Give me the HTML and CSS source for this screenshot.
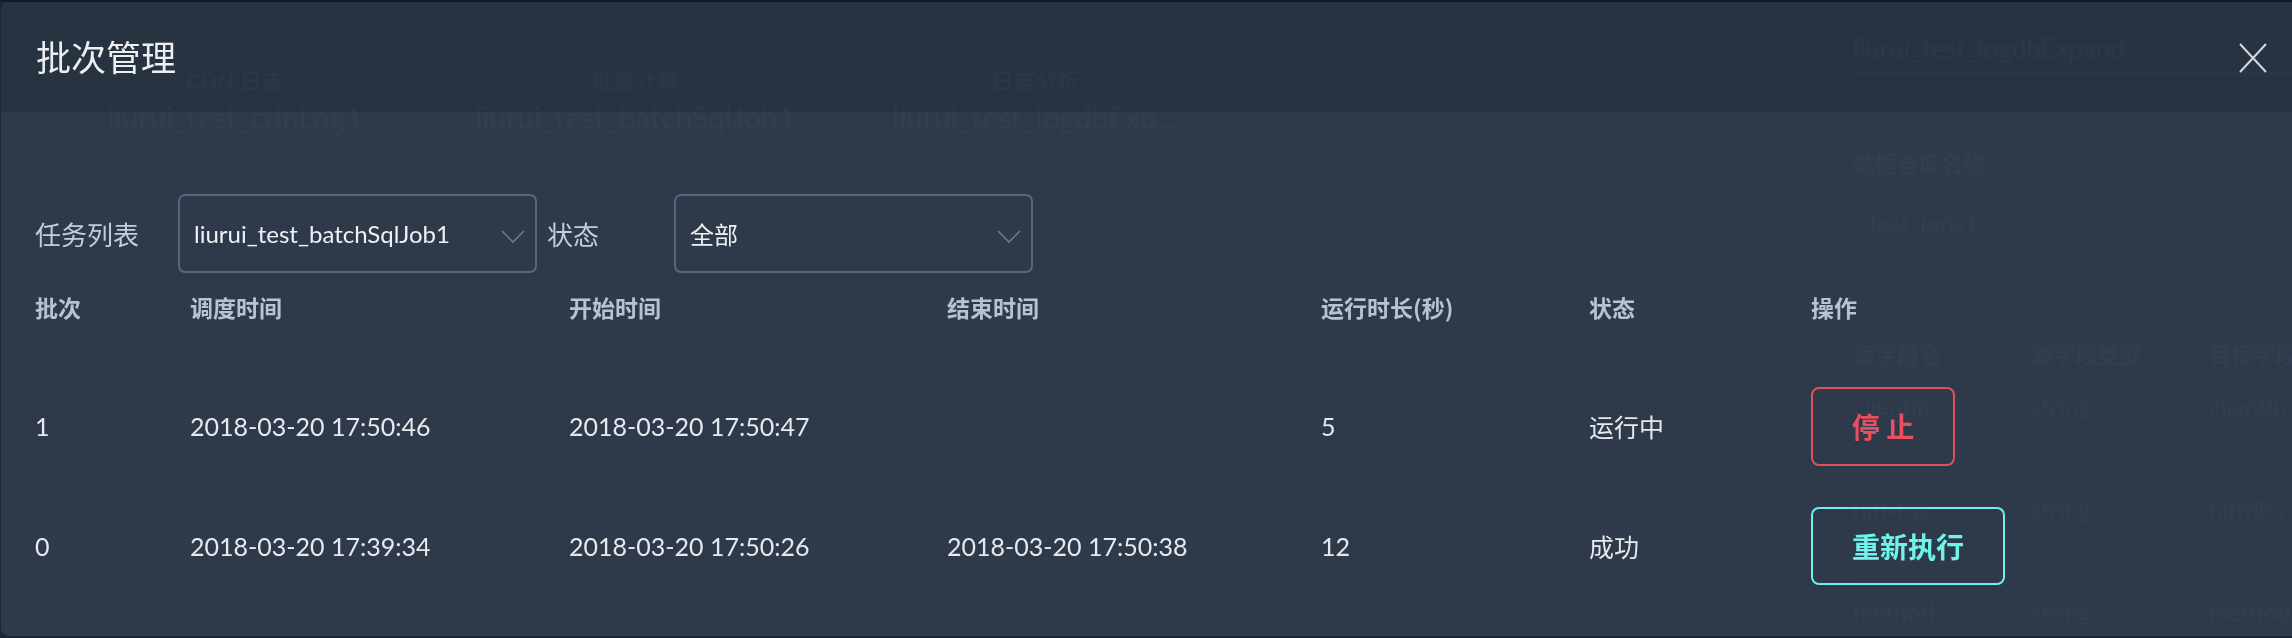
FILE: index.html
```html
<!DOCTYPE html>
<html lang="zh-CN">
<head>
<meta charset="utf-8">
<title>批次管理</title>
<link rel="stylesheet" href="styles.css">
</head>
<body>
<div class="page">
  <div class="bg-left">
    <div class="bg-cards">
      <div class="bg-card"><span class="bg-card-label">CDN 日志</span><span class="bg-card-name">liurui_test_cdnLog1</span></div>
      <div class="bg-card"><span class="bg-card-label">批量计算</span><span class="bg-card-name">liurui_test_batchSqlJob1</span></div>
      <div class="bg-card"><span class="bg-card-label">日志分析</span><span class="bg-card-name">liurui_test_logdbExp...</span></div>
    </div>
  </div>
  <div class="bg-right">
    <div class="bg-title">liurui_test_logdbExpand</div>
    <div class="bg-field-label">数据仓库名称</div>
    <div class="bg-field-value">test_joris1</div>
    <div class="bg-table">
      <div class="bg-tr bg-th"><span>源字段名</span><span>源字段类型</span><span>目标字段名</span></div>
      <div class="bg-tr"><span>clientIp</span><span>string</span><span>clientIp</span></div>
      <div class="bg-tr"><span>hitMiss</span><span>string</span><span>hitMiss</span></div>
      <div class="bg-tr"><span>method</span><span>string</span><span>method</span></div>
    </div>
  </div>
</div>

<div class="modal">
  <div class="modal-header">
    <h1 class="modal-title">批次管理</h1>
    <button class="modal-close" aria-label="关闭">
      <svg width="28" height="30" viewBox="0 0 28 30"><path d="M1 1 L27 29 M27 1 L1 29" stroke="#d6dae0" stroke-width="2" fill="none"/></svg>
    </button>
  </div>
  <div class="modal-body">
    <div class="filters">
      <span class="filter-label label-task">任务列表</span>
      <div class="select">
        <span class="select-value">liurui_test_batchSqlJob1</span>
        <svg class="chevron" width="24" height="13" viewBox="0 0 24 13"><polyline points="1,1 12,12 23,1" fill="none" stroke="#6c7b91" stroke-width="1.5"/></svg>
      </div>
      <span class="filter-label label-status">状态</span>
      <div class="select">
        <span class="select-value">全部</span>
        <svg class="chevron" width="24" height="13" viewBox="0 0 24 13"><polyline points="1,1 12,12 23,1" fill="none" stroke="#6c7b91" stroke-width="1.5"/></svg>
      </div>
    </div>

    <div class="table">
      <div class="tr th">
        <span>批次</span><span>调度时间</span><span>开始时间</span><span>结束时间</span><span>运行时长(秒)</span><span>状态</span><span>操作</span>
      </div>
      <div class="tbody">
        <div class="tr">
          <span>1</span><span>2018-03-20 17:50:46</span><span>2018-03-20 17:50:47</span><span></span><span>5</span><span>运行中</span>
          <span><button class="btn btn-stop">停 止</button></span>
        </div>
        <div class="tr">
          <span>0</span><span>2018-03-20 17:39:34</span><span>2018-03-20 17:50:26</span><span>2018-03-20 17:50:38</span><span>12</span><span>成功</span>
          <span><button class="btn btn-rerun">重新执行</button></span>
        </div>
      </div>
    </div>
  </div>
</div>
</body>
</html>
```

FILE: styles.css
```css
html, body {
  margin: 0;
  padding: 0;
  height: 100%;
  overflow: hidden;
}
body {
  background: #141b24;
  font-family: Lato, "Noto Sans CJK SC", sans-serif;
}

/* background page (seen through the modal) */
.page {
  display: grid;
  grid-template-columns: 1853px 1fr;
  height: 100%;
  background: #1d2734;
  color: #6a788d;
  margin-top: 2px;
  white-space: nowrap;
  overflow: hidden;
}
.bg-cards {
  display: flex;
  padding: 64px 0 0 35px;
}
.bg-card {
  width: 400px;
  display: flex;
  flex-direction: column;
  align-items: center;
  gap: 4px;
}
.bg-card-label { font-size: 22px; line-height: 30px; }
.bg-card-name { font-size: 30px; line-height: 34px; }
.bg-right {
  display: flex;
  flex-direction: column;
  overflow: hidden;
}
.bg-title {
  font-size: 26px;
  line-height: 32px;
  padding: 30px 0 8px;
  border-bottom: 1px solid #6a788d;
}
.bg-field-label {
  font-size: 22px;
  font-weight: bold;
  line-height: 30px;
  padding: 76px 0 14px;
  border-bottom: 1px solid #4a586c;
}
.bg-field-value {
  font-size: 24px;
  line-height: 30px;
  padding: 14px 16px 14px;
  border-bottom: 1px solid #4a586c;
}
.bg-table { padding-top: 87px; }
.bg-tr {
  display: grid;
  grid-template-columns: 178px 178px 1fr;
  font-size: 24px;
  line-height: 30px;
  padding: 20px 0 52px;
  border-bottom: 1px solid #4a586c;
}
.bg-tr span { overflow: hidden; }
.bg-th { padding: 0; font-weight: bold; font-size: 22px; }

/* modal */
.modal {
  position: fixed;
  top: 2px;
  left: 1px;
  right: -20px;
  bottom: 2px;
  border-radius: 8px;
  overflow: hidden;
  display: flex;
  flex-direction: column;
}
.modal-header {
  height: 110px;
  flex: none;
  display: flex;
  align-items: center;
  justify-content: space-between;
  padding: 0 45px 0 35px;
  background: rgba(41, 52, 67, 0.95);
}
.modal-title {
  margin: 0 0 4px;
  font-family: "Noto Sans CJK SC", sans-serif;
  font-size: 35px;
  font-weight: 400;
  color: #eceef1;
  line-height: 1;
}
.modal-close {
  background: none;
  border: 0;
  padding: 0;
  width: 28px;
  height: 30px;
  margin-top: 2px;
  display: block;
}
.modal-close svg { display: block; }
.modal-body {
  flex: 1;
  background: rgba(47, 59, 76, 0.95);
  padding-top: 82px;
}

.filters {
  display: flex;
  align-items: center;
  padding-left: 34px;
}
.filter-label {
  font-family: "Noto Sans CJK SC", sans-serif;
  font-size: 26px;
  color: #c4cdd9;
}
.label-task { margin-right: 39px; }
.label-status { margin: 0 75px 0 10px; }
.select {
  width: 359px;
  height: 79px;
  box-sizing: border-box;
  border: 2px solid #56667d;
  border-radius: 7px;
  display: flex;
  align-items: center;
  justify-content: space-between;
  padding: 0 10px 0 14px;
}
.select-value {
  font-size: 24px;
  color: #eef0f3;
}
.chevron { display: block; margin-top: 6px; }

.table { margin-top: 4px; }
.tr {
  display: grid;
  grid-template-columns: 155px 379px 378px 374px 268px 222px 1fr;
  align-items: center;
  padding-left: 34px;
}
.th {
  height: 60px;
  font-family: "Noto Sans CJK SC", sans-serif;
  font-size: 23px;
  font-weight: bold;
  color: #b7c2d3;
}
.tbody { padding-top: 29px; }
.tbody .tr {
  height: 120px;
  font-size: 25px;
  color: #e7e9ed;
}
.btn {
  font-family: "Noto Sans CJK SC", sans-serif;
  font-size: 28px;
  font-weight: bold;
  background: transparent;
  border: 2px solid;
  border-radius: 8px;
  height: 79px;
  padding: 0;
  white-space: nowrap;
  cursor: pointer;
  box-sizing: border-box;
}
.btn-stop {
  color: #e8505f;
  border-color: #e04f5d;
  width: 144px;
}
.btn-rerun {
  color: #6ff3ea;
  border-color: #6cefed;
  width: 194px;
  height: 78px;
}
```
